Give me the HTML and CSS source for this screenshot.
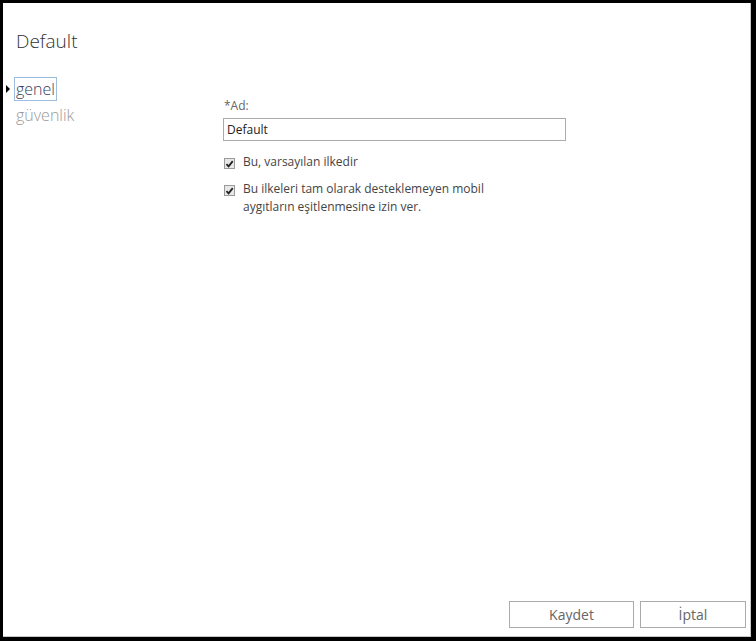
FILE: index.html
```html
<!DOCTYPE html>
<html lang="tr">
<head>
<meta charset="utf-8">
<title>Default</title>
<link rel="stylesheet" href="styles.css">
</head>
<body>
<div class="frame">
  <div class="dialog">
    <h1 class="title">Default</h1>
    <div class="main">
      <nav class="nav">
        <a class="nav-item active" href="#"><span class="caret"></span><span class="focus">genel</span></a>
        <a class="nav-item" href="#">güvenlik</a>
      </nav>
      <form class="form">
        <label class="field-label" for="ad">*Ad:</label>
        <input class="text-input" id="ad" type="text" value="Default">
        <label class="check">
          <span class="box"><svg viewBox="0 0 10 10" width="10" height="10"><path d="M1.6 5.2 L4 7.6 L8.6 1.8" fill="none" stroke="#222" stroke-width="2"/></svg></span>
          <span class="check-text">Bu, varsayılan ilkedir</span>
        </label>
        <label class="check">
          <span class="box"><svg viewBox="0 0 10 10" width="10" height="10"><path d="M1.6 5.2 L4 7.6 L8.6 1.8" fill="none" stroke="#222" stroke-width="2"/></svg></span>
          <span class="check-text">Bu ilkeleri tam olarak desteklemeyen mobil<br>aygıtların eşitlenmesine izin ver.</span>
        </label>
      </form>
    </div>
    <div class="footer">
      <button class="btn btn-save" type="button">Kaydet</button>
      <button class="btn btn-cancel" type="button">İptal</button>
    </div>
  </div>
</div>
</body>
</html>
```

FILE: styles.css
```css
html, body {
  margin: 0;
  padding: 0;
  background: #000;
}

.frame {
  width: 756px;
  height: 641px;
  box-sizing: border-box;
  padding: 3px 5px 4px 3px;
  background: #000;
}

.dialog {
  height: 100%;
  box-sizing: border-box;
  background: #fff;
  border-right: 1px solid #c8c8c8;
  border-bottom: 1px solid #c8c8c8;
  display: flex;
  flex-direction: column;
  font-family: "Open Sans", "Noto Sans", sans-serif;
  color: #333;
}

.title {
  margin: 25px 0 0 13px;
  font-size: 19px;
  font-weight: 300;
  color: #333;
  line-height: 26px;
}

.main {
  display: flex;
  flex: 1;
  margin-top: 22px;
}

.nav {
  width: 220px;
  display: flex;
  flex-direction: column;
}

.nav-item {
  position: relative;
  display: block;
  padding-left: 13px;
  font-size: 16px;
  line-height: 26px;
  font-weight: 300;
  color: #999;
  text-decoration: none;
}

.nav-item.active {
  color: #333c5c;
}

.focus {
  outline: 1px solid #9dbde0;
  outline-offset: 0;
  padding: 0 1px;
  margin-left: -1px;
}

.caret {
  position: absolute;
  left: 3px;
  top: 9px;
  width: 0;
  height: 0;
  border-top: 4px solid transparent;
  border-bottom: 4px solid transparent;
  border-left: 4px solid #000;
}

.form {
  display: flex;
  flex-direction: column;
  padding-top: 22px;
}

.field-label {
  font-size: 12px;
  line-height: 16px;
  color: #666;
  margin-left: 1px;
}

.text-input {
  width: 343px;
  height: 23px;
  box-sizing: border-box;
  margin-top: 4px;
  border: 1px solid #ababab;
  padding: 0 3px;
  font-family: "Open Sans", "Noto Sans", sans-serif;
  font-size: 12px;
  color: #222;
  outline: none;
}

.check {
  display: flex;
  align-items: flex-start;
  margin-top: 15px;
  margin-left: 1px;
  font-size: 12px;
  line-height: 18px;
  color: #444;
}

.check + .check {
  margin-top: 12px;
}

.box {
  width: 11px;
  height: 11px;
  box-sizing: border-box;
  margin-top: 2px;
  margin-right: 8px;
  border: 1px solid #9a9a9a;
  background: #e8e8e8;
  display: flex;
  align-items: center;
  justify-content: center;
  flex: none;
}

.check-text {
  margin-top: -3px;
}

.footer {
  display: flex;
  justify-content: flex-end;
  gap: 6px;
  padding: 0 4px 8px 0;
}

.btn {
  height: 27px;
  box-sizing: border-box;
  border: 1px solid #ababab;
  background: #fff;
  font-family: "Open Sans", "Noto Sans", sans-serif;
  font-size: 14px;
  color: #666;
  padding: 0;
}

.btn-save {
  width: 125px;
}

.btn-cancel {
  width: 106px;
}
```
